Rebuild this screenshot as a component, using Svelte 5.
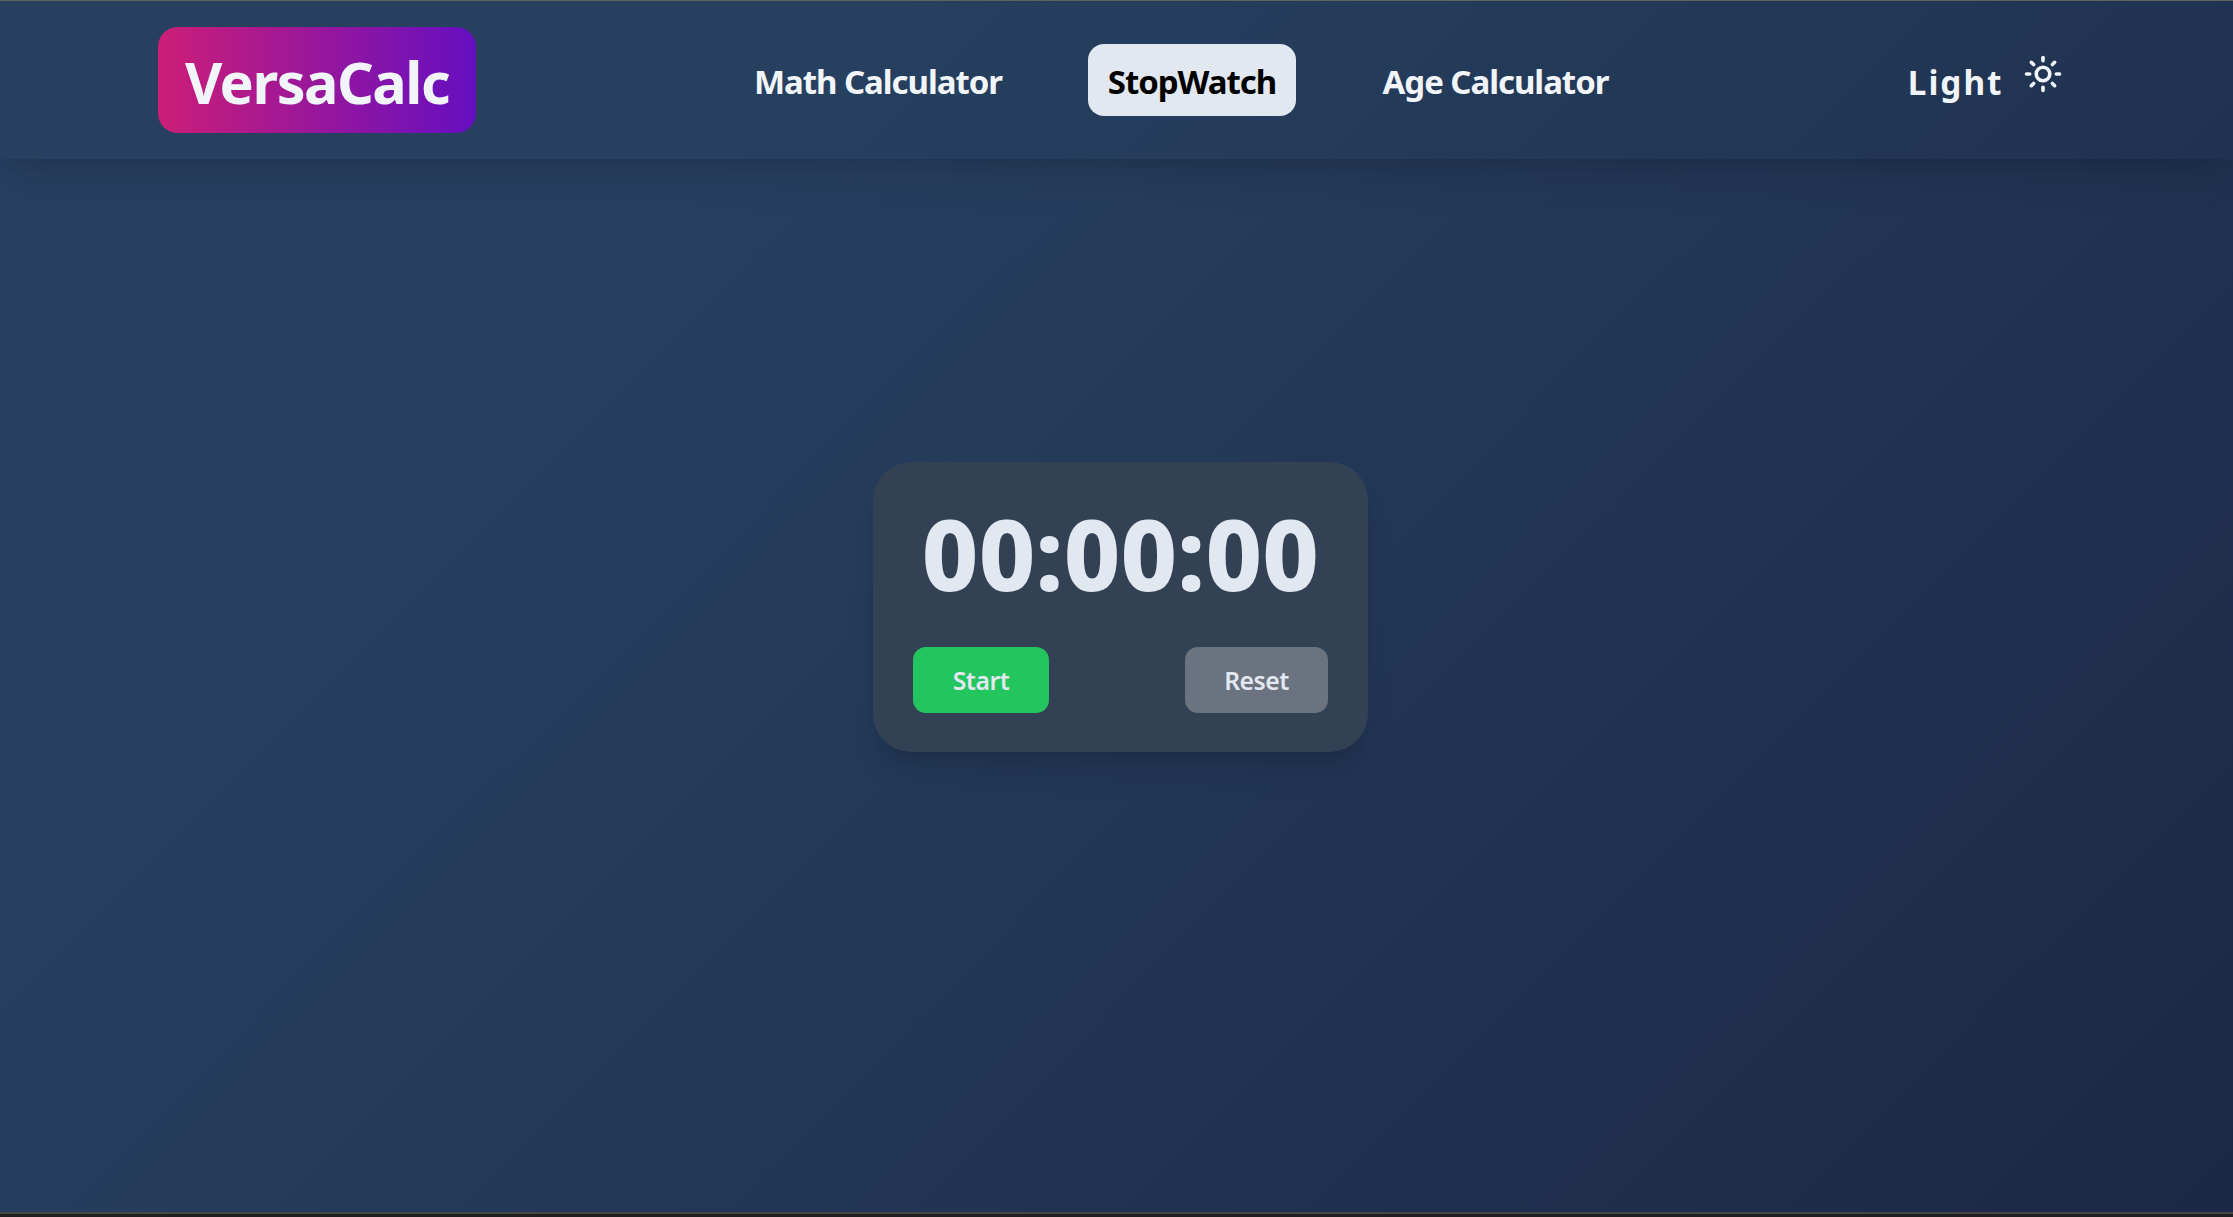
<script>
  const links = [
    { label: 'Math Calculator', kind: 'math' },
    { label: 'StopWatch', kind: 'watch', active: true },
    { label: 'Age Calculator', kind: 'age' },
  ];
  const rays = [0, 45, 90, 135, 180, 225, 270, 315];

  let seconds = $state(0);
  let timer = $state(null);
  const pad = (n) => String(n).padStart(2, '0');
  const display = $derived(
    `${pad(Math.floor(seconds / 3600))}:${pad(Math.floor(seconds / 60) % 60)}:${pad(seconds % 60)}`
  );

  function toggle() {
    if (timer) {
      clearInterval(timer);
      timer = null;
    } else {
      timer = setInterval(() => (seconds += 1), 1000);
    }
  }
  function reset() {
    clearInterval(timer);
    timer = null;
    seconds = 0;
  }
</script>

<div class="page">
  <header>
    <div class="logo"><span>VersaCalc</span></div>
    <nav>
      {#each links as link}
        <a class={link.kind} class:active={link.active} href="#{link.kind}">{link.label}</a>
      {/each}
    </nav>
    <div class="theme">
      <span>Light</span>
      <svg viewBox="-20 -20 40 40" width="40" height="40">
        <circle r="6.8" />
        {#each rays as angle}
          <path d="M0 -13.3V-16.5" transform="rotate({angle})" />
        {/each}
      </svg>
    </div>
  </header>
  <main>
    <section class="card">
      <div class="time">{display}</div>
      <div class="actions">
        <button class="start" onclick={toggle}>{timer ? 'Stop' : 'Start'}</button>
        <button class="reset" onclick={reset}>Reset</button>
      </div>
    </section>
  </main>
</div>

<style>
  :global(body) {
    margin: 0;
    background: #1f1f1f;
  }
  .page {
    box-sizing: border-box;
    height: 1217px;
    display: flex;
    flex-direction: column;
    border-top: 1px solid #5f6162;
    border-bottom: 3px solid #1f1f1f;
    font-family: 'Noto Sans', 'Open Sans', sans-serif;
    color: #f1f5f9;
    background: linear-gradient(315deg, #1b2845 0%, #274060 74%) padding-box;
    overflow: hidden;
  }
  .page::after {
    content: '';
    height: 2px;
    flex: none;
    background: #474747;
  }
  header {
    box-sizing: border-box;
    flex: none;
    height: 158px;
    padding: 0 170px 0 158px;
    display: flex;
    align-items: center;
    box-shadow: 0 25px 38px -8px rgba(0, 0, 0, 0.11), 0 10px 14px -8px rgba(0, 0, 0, 0.08);
  }
  .logo {
    width: 318px;
    height: 106px;
    border-radius: 20px;
    display: flex;
    align-items: center;
    justify-content: center;
    background: linear-gradient(90deg, #cc1e77, #650fc1);
    font-size: 57.5px;
    font-weight: 700;
    letter-spacing: -1.5px;
    white-space: nowrap;
  }
  .logo span {
    padding-top: 3.5px;
  }
  nav {
    display: flex;
    align-items: center;
    gap: 66px;
    margin-left: 258px;
  }
  nav a {
    box-sizing: border-box;
    height: 72px;
    padding: 3px 0 0;
    display: flex;
    align-items: center;
    justify-content: center;
    border-radius: 16px;
    color: inherit;
    font-size: 33px;
    font-weight: 700;
    letter-spacing: -1.05px;
    text-decoration: none;
    white-space: nowrap;
  }
  .math {
    width: 288px;
  }
  .watch {
    width: 208px;
  }
  .age {
    width: 267px;
  }
  nav a.active {
    background: #e2e8f0;
    color: #000;
  }
  .theme {
    display: flex;
    align-items: center;
    margin-left: auto;
    font-size: 33.3px;
    font-weight: 700;
    letter-spacing: 2px;
  }
  .theme span {
    padding-top: 3px;
  }
  .theme svg {
    margin: 0 0 11.5px 19.5px;
    fill: none;
    stroke: #f1f5f9;
    stroke-width: 3.6;
    stroke-linecap: round;
  }
  main {
    flex: 1;
    display: flex;
    justify-content: center;
    align-items: flex-start;
    padding: 303px 0 0 8px;
  }
  .card {
    box-sizing: border-box;
    width: 495px;
    height: 290px;
    padding: 0 40px 39px;
    border-radius: 38px;
    background: #334155;
    display: flex;
    flex-direction: column;
    justify-content: space-between;
    color: #e2e8f0;
    box-shadow: 0 24px 30px -6px rgba(0, 0, 0, 0.1), 0 10px 12px -7px rgba(0, 0, 0, 0.1);
  }
  .time {
    margin-top: 25px;
    font-size: 98px;
    line-height: 132px;
    font-weight: 800;
    text-align: center;
    white-space: nowrap;
    letter-spacing: 0.2px;
  }
  .actions {
    display: flex;
    justify-content: space-between;
  }
  button {
    height: 66px;
    padding: 0;
    border: 0;
    border-radius: 13px;
    color: inherit;
    font: 600 24.8px 'Noto Sans', 'Open Sans', sans-serif;
    letter-spacing: -0.5px;
  }
  .start {
    width: 136px;
    background: #22c55e;
  }
  .reset {
    width: 143px;
    background: #6b7280;
  }
</style>
